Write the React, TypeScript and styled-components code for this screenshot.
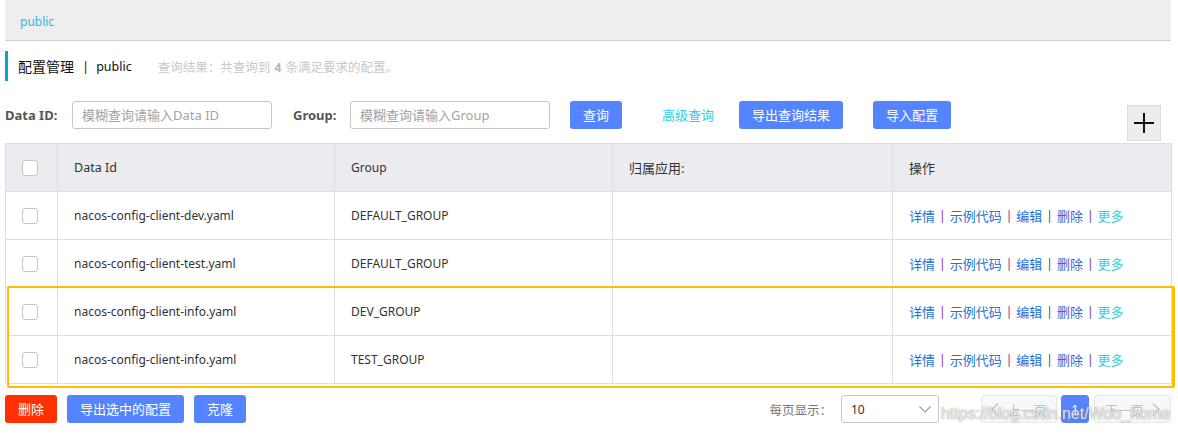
import React from "react";
import styled, { createGlobalStyle } from "styled-components";

const GlobalStyle = createGlobalStyle`
  html, body { margin: 0; padding: 0; background: #fff; overflow: hidden; }
  body { font-family: "Noto Sans", "Noto Sans CJK SC", sans-serif; color: #333; }
  * { box-sizing: border-box; }
`;

const Page = styled.div`
  position: relative;
  width: 1166px;
  margin-left: 5px;
`;

const TopBar = styled.div`
  height: 41px;
  background: #eeeeee;
  border-bottom: 1px solid #cfcfcf;
  display: flex;
  align-items: center;
  padding-left: 15px;
`;

const Crumb = styled.span`
  font-size: 12px;
  color: #33b5dc;
  margin-top: 2px;
`;

const TitleRow = styled.div`
  margin-top: 10px;
  height: 30px;
  border-left: 3px solid #0d9fd8;
  padding-left: 10px;
  display: flex;
  align-items: center;
`;

const Title = styled.span<{ $latin?: boolean }>`
  font-size: ${(p) => (p.$latin ? "12.5px" : "14px")};
  color: #111;
`;

const Divider = styled.span`
  margin: 0 7px 0 8px;
  font-size: 13px;
  color: #222;
`;

const Result = styled.span`
  margin-left: 26px;
  font-size: 12.5px;
  color: #c8c8c8;
  b {
    font-weight: 700;
    color: #b8b8b8;
    margin: 0 4px;
  }
`;

const SearchRow = styled.div`
  margin-top: 20px;
  display: flex;
  align-items: flex-start;
`;

const Label = styled.label<{ $w: number; $ml?: number }>`
  width: ${(p) => p.$w}px;
  margin-left: ${(p) => p.$ml ?? 0}px;
  height: 28px;
  line-height: 28px;
  font-size: 13px;
  font-weight: 700;
  color: #555;
  white-space: nowrap;
`;

const Input = styled.input`
  width: 200px;
  height: 28px;
  border: 1px solid #c4c6cf;
  border-radius: 3px;
  padding: 0 9px;
  font-family: inherit;
  font-size: 13px;
  color: #333;
  outline: none;
  &::placeholder {
    color: #a3a3a3;
  }
`;

const Btn = styled.button<{ $danger?: boolean; $ml?: number }>`
  margin-left: ${(p) => p.$ml ?? 0}px;
  height: 28px;
  padding: 0 13px;
  border: none;
  border-radius: 3px;
  background: ${(p) => (p.$danger ? "#ff3000" : "#5584ff")};
  color: #fff;
  font-family: inherit;
  font-size: 13px;
  line-height: 28px;
  white-space: nowrap;
  cursor: pointer;
`;

const TextLink = styled.a<{ $ml?: number }>`
  margin-left: ${(p) => p.$ml ?? 0}px;
  height: 28px;
  line-height: 28px;
  font-size: 13px;
  color: #33cde5;
  text-decoration: none;
  white-space: nowrap;
`;

const PlusBtn = styled.button`
  margin-left: auto;
  margin-right: 10px;
  margin-top: 4px;
  width: 34px;
  height: 36px;
  padding: 0;
  background: #ededed;
  border: 1px solid #dcdcdc;
  display: flex;
  align-items: center;
  justify-content: center;
`;

const TableWrap = styled.div`
  position: relative;
  margin-top: 2px;
`;

const Table = styled.table`
  width: 1166px;
  border-collapse: collapse;
  table-layout: fixed;
`;

const Col = styled.col<{ $w: number }>`
  width: ${(p) => p.$w}px;
`;

const Tr = styled.tr`
  height: 48px;
`;

const Th = styled.th<{ $size?: number; $center?: boolean }>`
  height: 48px;
  background: #ebecf0;
  border: 1px solid #dcdee3;
  text-align: ${(p) => (p.$center ? "center" : "left")};
  font-weight: 400;
  padding: ${(p) => (p.$center ? "0" : "0 16px")};
  font-size: ${(p) => p.$size ?? 12}px;
  color: #333;
  vertical-align: middle;
`;

const Td = styled.td<{ $center?: boolean }>`
  height: 48px;
  border: 1px solid #dcdee3;
  padding: ${(p) => (p.$center ? "0" : "0 16px")};
  text-align: ${(p) => (p.$center ? "center" : "left")};
  font-size: 12px;
  color: #333;
  vertical-align: middle;
  white-space: nowrap;
`;

const Check = styled.span`
  display: inline-block;
  width: 16px;
  height: 16px;
  border: 1px solid #c4c6cf;
  border-radius: 3px;
  background: #fff;
  vertical-align: middle;
  margin-right: 3px;
`;

const Ops = styled.div`
  display: flex;
  align-items: center;
  font-size: 13px;
`;

const OpLink = styled.a<{ $more?: boolean }>`
  color: ${(p) => (p.$more ? "#33cde5" : "#1f6fd6")};
  text-decoration: none;
  cursor: pointer;
`;

const Sep = styled.span`
  color: #7b2f87;
  margin: 0 4px;
  font-size: 12px;
`;

const Highlight = styled.div`
  position: absolute;
  left: 2px;
  top: 143px;
  width: 1168px;
  height: 102px;
  border: 2px solid #ffbb00;
  border-right-width: 3px;
  border-radius: 2px;
  pointer-events: none;
`;

const BottomBar = styled.div`
  margin-top: 11px;
  height: 28px;
  display: flex;
  align-items: center;
`;

const SizeLabel = styled.span`
  margin-left: auto;
  font-size: 12.5px;
  color: #777;
`;

const Select = styled.div`
  margin-left: 9px;
  width: 98px;
  height: 28px;
  border: 1px solid #c4c6cf;
  border-radius: 3px;
  padding: 0 7px 0 9px;
  display: flex;
  align-items: center;
  justify-content: space-between;
  font-size: 12px;
  color: #333;
`;

const PageBtn = styled.div<{ $w: number; $ml: number; $active?: boolean }>`
  margin-left: ${(p) => p.$ml}px;
  width: ${(p) => p.$w}px;
  height: 28px;
  border-radius: 3px;
  border: 1px solid ${(p) => (p.$active ? "#5584ff" : "#e6e7eb")};
  background: ${(p) => (p.$active ? "#5584ff" : "#f7f8fa")};
  color: ${(p) => (p.$active ? "#fff" : "#c1c1c1")};
  display: flex;
  align-items: center;
  justify-content: center;
  gap: 8px;
  font-size: 13px;
`;

const Watermark = styled.div`
  position: absolute;
  left: 936px;
  top: 405px;
  font-family: "Liberation Sans", Arial, sans-serif;
  font-size: 16px;
  line-height: 18px;
  color: rgba(255, 255, 255, 0.8);
  text-shadow: 0 0 1px rgba(110, 110, 110, 0.7), 0 0 2px rgba(150, 150, 150, 0.5);
  white-space: nowrap;
  pointer-events: none;
`;

const Blob = styled.div`
  position: absolute;
  left: 1040px;
  top: 429px;
  width: 30px;
  height: 6px;
  border-radius: 50% 50% 0 0 / 100% 100% 0 0;
  background: linear-gradient(#9a9a9a, #2a2a2a 70%);
`;

const rows = [
  { id: "nacos-config-client-dev.yaml", group: "DEFAULT_GROUP" },
  { id: "nacos-config-client-test.yaml", group: "DEFAULT_GROUP" },
  { id: "nacos-config-client-info.yaml", group: "DEV_GROUP" },
  { id: "nacos-config-client-info.yaml", group: "TEST_GROUP" },
];

const ChevronLeft = () => (
  <svg width="8" height="13" viewBox="0 0 8 13">
    <polyline points="7,0.5 1,6.5 7,12.5" fill="none" stroke="#c1c1c1" strokeWidth="1.3" />
  </svg>
);

const ChevronRight = () => (
  <svg width="8" height="13" viewBox="0 0 8 13">
    <polyline points="1,0.5 7,6.5 1,12.5" fill="none" stroke="#c1c1c1" strokeWidth="1.3" />
  </svg>
);

export default function App() {
  return (
    <>
      <GlobalStyle />
      <Page>
        <TopBar>
          <Crumb>public</Crumb>
        </TopBar>
        <TitleRow>
          <Title>配置管理</Title>
          <Divider>|</Divider>
          <Title $latin>public</Title>
          <Result>
            查询结果：共查询到<b>4</b>条满足要求的配置。
          </Result>
        </TitleRow>
        <SearchRow>
          <Label $w={67}>Data ID:</Label>
          <Input placeholder="模糊查询请输入Data ID" />
          <Label $w={57} $ml={21}>Group:</Label>
          <Input placeholder="模糊查询请输入Group" />
          <Btn $ml={20}>查询</Btn>
          <TextLink $ml={40}>高级查询</TextLink>
          <Btn $ml={25}>导出查询结果</Btn>
          <Btn $ml={30}>导入配置</Btn>
          <PlusBtn>
            <svg width="20" height="20" viewBox="0 0 20 20">
              <line x1="0" y1="10" x2="20" y2="10" stroke="#111" strokeWidth="2" />
              <line x1="10" y1="0" x2="10" y2="20" stroke="#111" strokeWidth="2" />
            </svg>
          </PlusBtn>
        </SearchRow>
        <TableWrap>
          <Table>
            <colgroup>
              <Col $w={52} />
              <Col $w={277} />
              <Col $w={278} />
              <Col $w={280} />
              <Col $w={279} />
            </colgroup>
            <thead>
              <Tr>
                <Th $center>
                  <Check />
                </Th>
                <Th $size={12.5}>Data Id</Th>
                <Th>Group</Th>
                <Th $size={13}>归属应用:</Th>
                <Th $size={13}>操作</Th>
              </Tr>
            </thead>
            <tbody>
              {rows.map((r, i) => (
                <Tr key={i}>
                  <Td $center>
                    <Check />
                  </Td>
                  <Td>{r.id}</Td>
                  <Td>{r.group}</Td>
                  <Td />
                  <Td>
                    <Ops>
                      <OpLink>详情</OpLink>
                      <Sep>|</Sep>
                      <OpLink>示例代码</OpLink>
                      <Sep>|</Sep>
                      <OpLink>编辑</OpLink>
                      <Sep>|</Sep>
                      <OpLink>删除</OpLink>
                      <Sep>|</Sep>
                      <OpLink $more>更多</OpLink>
                    </Ops>
                  </Td>
                </Tr>
              ))}
            </tbody>
          </Table>
          <Highlight />
        </TableWrap>
        <BottomBar>
          <Btn $danger>删除</Btn>
          <Btn $ml={10}>导出选中的配置</Btn>
          <Btn $ml={10}>克隆</Btn>
          <SizeLabel>每页显示：</SizeLabel>
          <Select>
            <span>10</span>
            <svg width="12" height="7" viewBox="0 0 12 7">
              <polyline points="0.5,0.5 6,6 11.5,0.5" fill="none" stroke="#999" strokeWidth="1.1" />
            </svg>
          </Select>
          <PageBtn $w={76} $ml={42}>
            <ChevronLeft />
            <span>上一页</span>
          </PageBtn>
          <PageBtn $w={28} $ml={4} $active>
            1
          </PageBtn>
          <PageBtn $w={77} $ml={5}>
            <span>下一页</span>
            <ChevronRight />
          </PageBtn>
        </BottomBar>
        <Watermark>https://blog.csdn.net/Woo_home</Watermark>
        <Blob />
      </Page>
    </>
  );
}
